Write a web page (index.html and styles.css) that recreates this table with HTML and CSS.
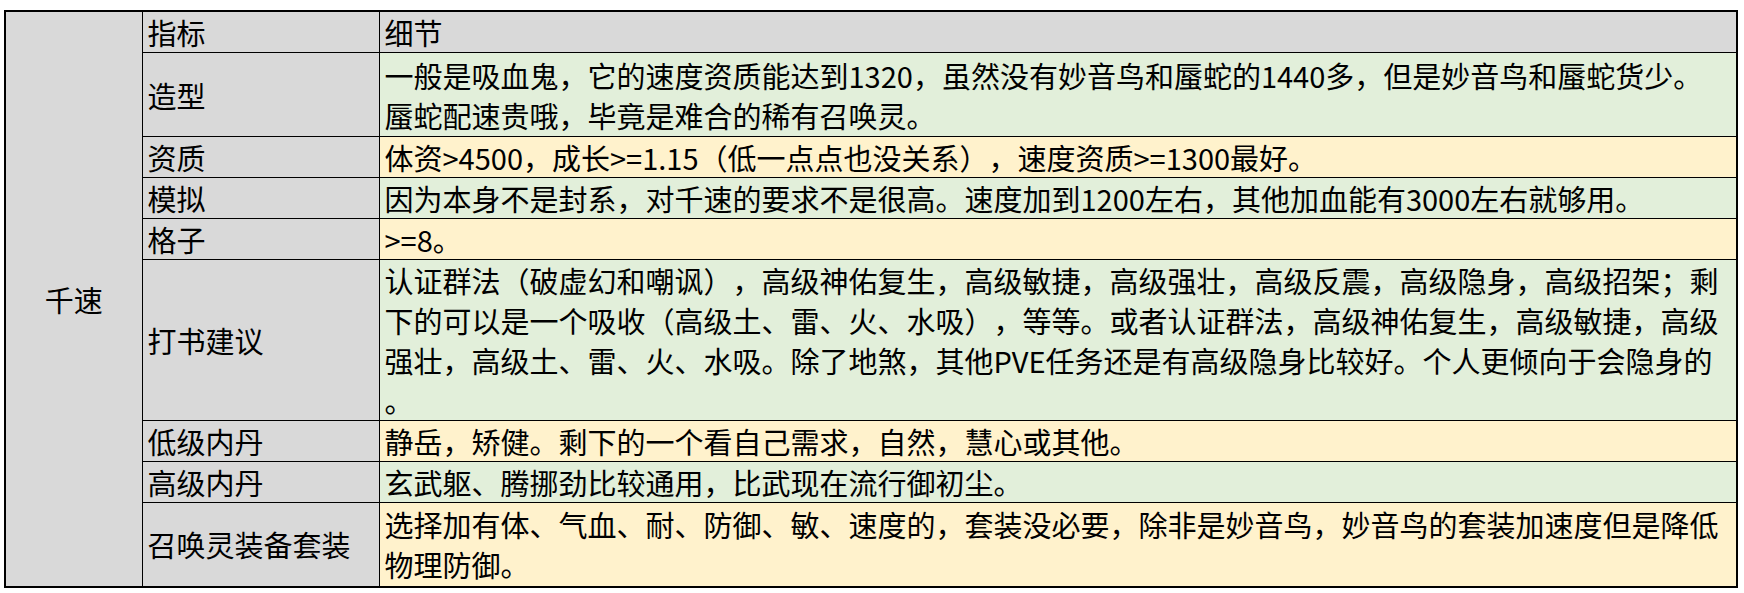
FILE: index.html
```html
<!DOCTYPE html>
<html lang="zh-CN">
<head>
<meta charset="utf-8">
<title>千速</title>
<link rel="stylesheet" href="styles.css">
</head>
<body>
<table class="sheet">
  <colgroup>
    <col class="c-name">
    <col class="c-key">
    <col class="c-val">
  </colgroup>
  <tbody>
    <tr class="h1">
      <td class="name" rowspan="9">千速</td>
      <td class="key head">指标</td>
      <td class="val head">细节</td>
    </tr>
    <tr class="h2">
      <td class="key">造型</td>
      <td class="val green">一般是吸血鬼，它的速度资质能达到1320，虽然没有妙音鸟和蜃蛇的1440多，但是妙音鸟和蜃蛇货少。<br>蜃蛇配速贵哦，毕竟是难合的稀有召唤灵。</td>
    </tr>
    <tr class="h1">
      <td class="key">资质</td>
      <td class="val yellow">体资&gt;4500，成长&gt;=1.15（低一点点也没关系），速度资质&gt;=1300最好。</td>
    </tr>
    <tr class="h1">
      <td class="key">模拟</td>
      <td class="val green">因为本身不是封系，对千速的要求不是很高。速度加到1200左右，其他加血能有3000左右就够用。</td>
    </tr>
    <tr class="h1">
      <td class="key">格子</td>
      <td class="val yellow">&gt;=8。</td>
    </tr>
    <tr class="h4">
      <td class="key">打书建议</td>
      <td class="val green">认证群法（破虚幻和嘲讽），高级神佑复生，高级敏捷，高级强壮，高级反震，高级隐身，高级招架；剩<br>下的可以是一个吸收（高级土、雷、火、水吸），等等。或者认证群法，高级神佑复生，高级敏捷，高级<br>强壮，高级土、雷、火、水吸。除了地煞，其他PVE任务还是有高级隐身比较好。个人更倾向于会隐身的<br>。</td>
    </tr>
    <tr class="h1">
      <td class="key">低级内丹</td>
      <td class="val yellow">静岳，矫健。剩下的一个看自己需求，自然，慧心或其他。</td>
    </tr>
    <tr class="h1">
      <td class="key">高级内丹</td>
      <td class="val green">玄武躯、腾挪劲比较通用，比武现在流行御初尘。</td>
    </tr>
    <tr class="h2">
      <td class="key">召唤灵装备套装</td>
      <td class="val yellow">选择加有体、气血、耐、防御、敏、速度的，套装没必要，除非是妙音鸟，妙音鸟的套装加速度但是降低<br>物理防御。</td>
    </tr>
  </tbody>
</table>
</body>
</html>
```

FILE: styles.css
```css
html, body {
  margin: 0;
  padding: 0;
  background: #ffffff;
}

body {
  padding: 10px 0 0 4px;
  font-family: "Noto Sans CJK SC", "Microsoft YaHei", sans-serif;
  font-size: 29px;
  color: #000000;
  text-spacing-trim: space-all;
}

.sheet {
  border-collapse: collapse;
  table-layout: fixed;
  width: 1734px;
  border: 2px solid #000000;
}

.c-name { width: 137px; }
.c-key { width: 237px; }

.sheet td {
  padding: 0 5px;
  line-height: 40px;
  border: 1px solid #000000;
  vertical-align: middle;
  white-space: nowrap;
  overflow: hidden;
}

.h1 { height: 39px; }
.h2 { height: 84px; }
.h4 { height: 161px; }

.name {
  background: #d9d9d9;
  text-align: center;
  border-right: 2px solid #000000;
}

.key {
  background: #d9d9d9;
}

.head {
  background: #d9d9d9;
  border-bottom: 2px solid #000000;
}

.green { background: #e2efda; }
.yellow { background: #fff2cc; }
```
